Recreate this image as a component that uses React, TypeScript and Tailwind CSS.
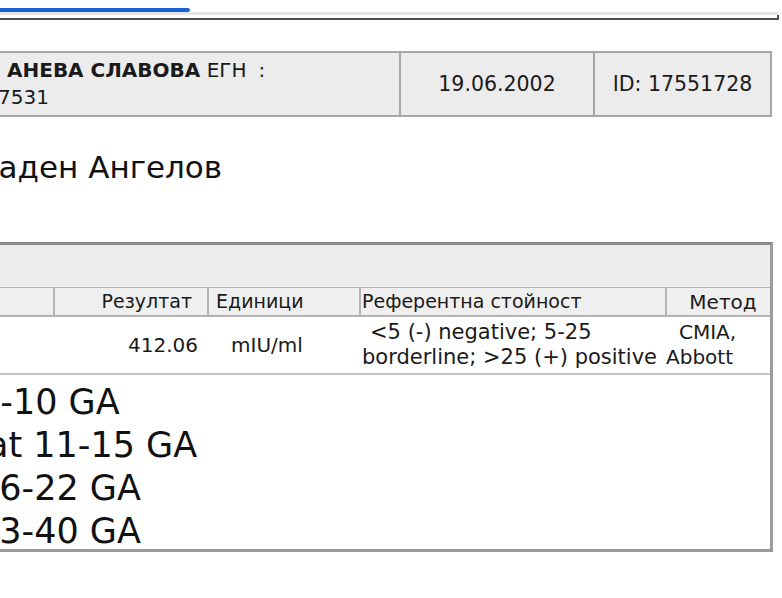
export default function App() {
  return (
    <div className="w-[782px] h-[598px] overflow-hidden bg-white text-[#1a1a1a] font-['DejaVu_Sans',Verdana,sans-serif]">
      {/* Tab strip */}
      <div className="pt-[8px]">
        <div className="h-[4px] w-[190px] rounded-r-[2px] bg-[#1862d6]" />
        <div className="h-[3px] w-[778px] bg-[#e3e5e9]" />
        <div className="h-[5px] w-[779px] border-b-2 border-r-2 border-[#4d4d4d]" />
      </div>

      {/* Patient header */}
      <div className="mt-[31px] -ml-[10px] flex h-[66px] w-[782px] border-2 border-[#a6a6a6] bg-[#ececec]">
        <div className="flex w-[409px] flex-col justify-center overflow-hidden border-r-2 border-[#a6a6a6] text-[20px] leading-[27px]">
          <div className="whitespace-nowrap pl-[15px]">
            <span className="font-bold">АНЕВА СЛАВОВА</span> ЕГН<span className="ml-[12px]">:</span>
          </div>
          <div className="whitespace-nowrap pl-[6px]">7531</div>
        </div>
        <div className="flex w-[194px] items-center justify-center border-r-2 border-[#a6a6a6] text-[20.5px]">
          19.06.2002
        </div>
        <div className="flex flex-1 items-center justify-center text-[20.5px]">ID: 17551728</div>
      </div>

      {/* Doctor */}
      <div className="mt-[30px] -ml-[48px] whitespace-nowrap text-[31px] leading-[40px] text-[#111]">
        Младен Ангелов
      </div>

      {/* Results table */}
      <div className="mt-[55px] -ml-[10px] w-[783px] border-[3px] border-[#9b9b9b] border-t-[#8a8a8a]">
        <div className="h-[43px] border-b border-[#b5b5b5] bg-[#ededed]" />

        <div className="flex h-[29px] border-b-2 border-[#b3b3b3] bg-[#efefef] text-[19px]">
          <div className="w-[60px]" />
          <div className="flex w-[154px] items-center justify-end border-l-2 border-[#b3b3b3] pr-[15px]">Резултат</div>
          <div className="flex w-[152px] items-center border-l-2 border-[#b3b3b3] pl-[7px]">Единици</div>
          <div className="flex w-[306px] items-center border-l-2 border-[#b3b3b3] pl-[1px]">Референтна стойност</div>
          <div className="flex flex-1 items-center justify-center border-l-2 border-[#b3b3b3] pl-[9px] text-[20px]">Метод</div>
        </div>

        <div className="flex h-[58px] border-b-2 border-[#c4c4c4] text-[20px] leading-[25px]">
          <div className="w-[60px]" />
          <div className="flex w-[154px] items-center justify-end pr-[9px]">412.06</div>
          <div className="flex w-[152px] items-center pl-[24px]">mIU/ml</div>
          <div className="flex w-[306px] flex-col justify-center whitespace-nowrap text-[21px]">
            <div className="pl-[11px]">&lt;5 (-) negative; 5-25</div>
            <div className="pl-[3px]">borderline; &gt;25 (+) positive</div>
          </div>
          <div className="flex flex-1 flex-col justify-center whitespace-nowrap">
            <div className="pl-[14px]">CMIA,</div>
            <div className="pl-[1px]">Abbott</div>
          </div>
        </div>

        <div className="h-[174px] overflow-hidden pt-[6px] text-[35px] leading-[43px] text-[#111]">
          <div className="whitespace-nowrap -ml-[15px]">5-10 GA</div>
          <div className="whitespace-nowrap -ml-[6px]">at 11-15 GA</div>
          <div className="whitespace-nowrap -ml-[16px]">16-22 GA</div>
          <div className="whitespace-nowrap -ml-[16px]">23-40 GA</div>
        </div>
      </div>
    </div>
  )
}
